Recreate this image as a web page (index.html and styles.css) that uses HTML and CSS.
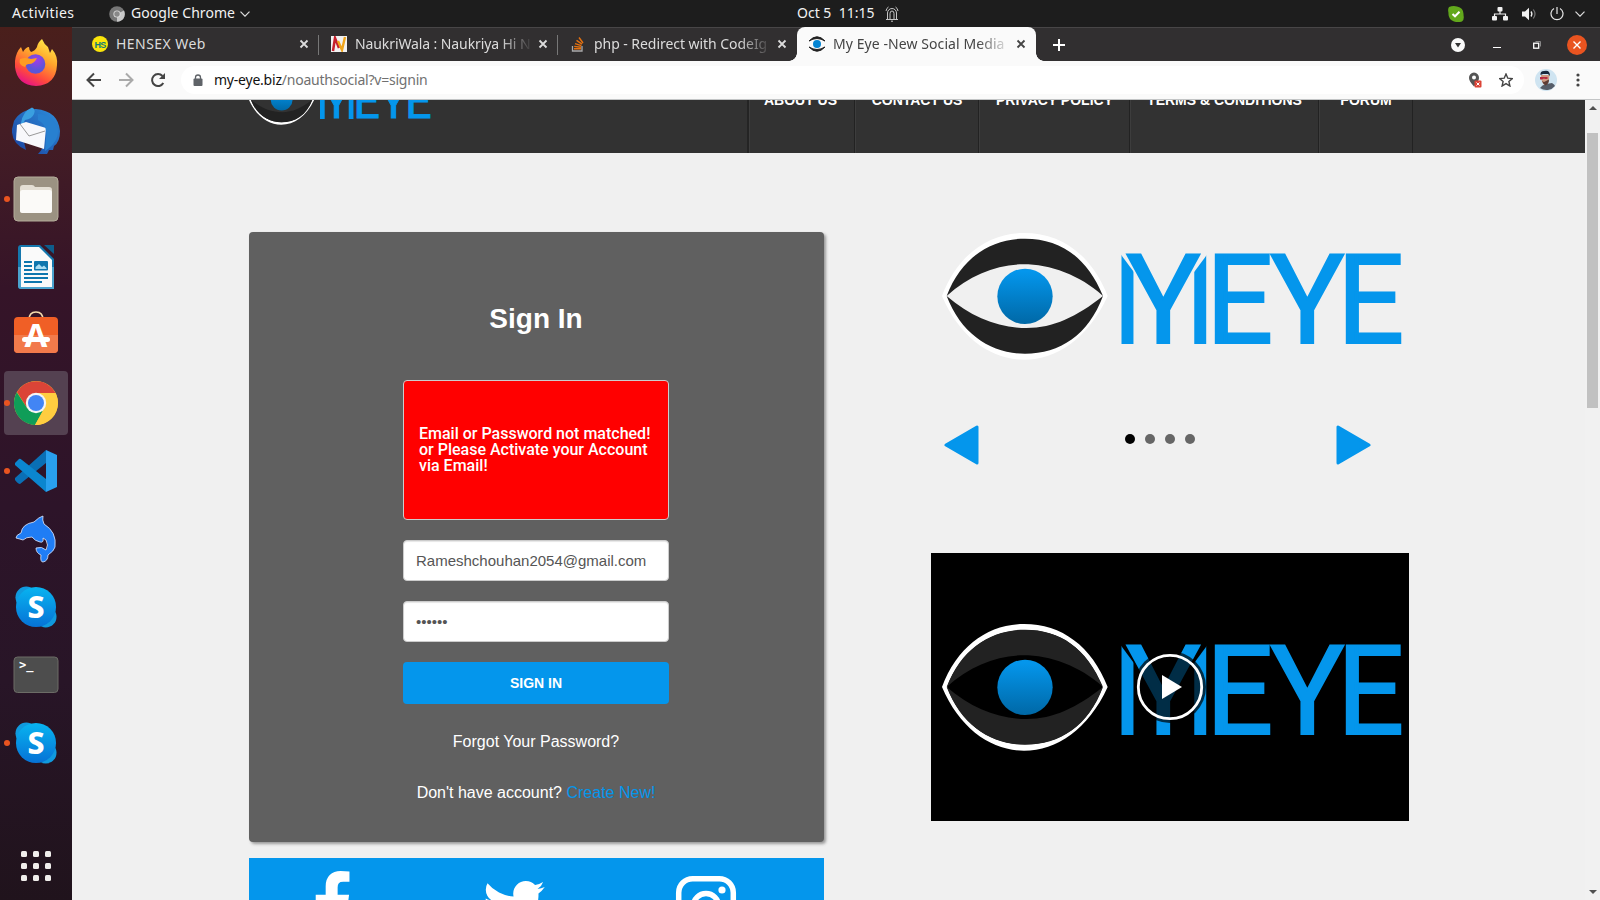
FILE: index.html
```html
<!DOCTYPE html>
<html lang="en">
<head>
<meta charset="utf-8">
<title>My Eye -New Social Media</title>
<link rel="stylesheet" href="styles.css">
</head>
<body>
<svg class="defs" width="0" height="0">
  <defs>
    <linearGradient id="iris" x1="0" y1="0" x2="0" y2="1"><stop offset="0.05" stop-color="#0496ec"/><stop offset="1" stop-color="#0068a6"/></linearGradient>
    <linearGradient id="sky" x1="0" y1="0" x2="0" y2="1"><stop offset="0" stop-color="#08b4f0"/><stop offset="1" stop-color="#0672d6"/></linearGradient>
    <linearGradient id="fox" x1="0.8" y1="0" x2="0.3" y2="1"><stop offset="0" stop-color="#fff14a"/><stop offset="0.4" stop-color="#ffa42c"/><stop offset="0.75" stop-color="#ff4a3c"/><stop offset="1" stop-color="#e5108a"/></linearGradient>
    <radialGradient id="globe" cx="0.55" cy="0.3"><stop offset="0" stop-color="#a13bea"/><stop offset="1" stop-color="#5b55d8"/></radialGradient>
    <linearGradient id="bird" x1="0" y1="1" x2="1" y2="0"><stop offset="0" stop-color="#1a3f9c"/><stop offset="1" stop-color="#2d8fdd"/></linearGradient>
    <clipPath id="legLeft"><path d="M600 100L646 162V380H600Z"/></clipPath>
    <clipPath id="legRight"><path d="M864 100L818 162V380H864Z"/></clipPath>
    <symbol id="logo" viewBox="33 27 1434 402">
      <path fill="#fff" fill-rule="evenodd" d="M66 228C112 105 205 39 312 39C425 39 515 105 563 228C505 355 410 419 312 419C215 419 120 355 66 228ZM81 228C126 345 215 400 315 400C420 400 504 345 548 228C499 111 420 57 315 57C216 57 126 111 81 228Z"/>
      <path fill="#222" fill-rule="evenodd" d="M80 228C125 345 215 401 315 401C420 401 505 345 549 228C500 110 420 56 315 56C215 56 125 110 80 228ZM80 228C150 165 230 133 310 133C390 133 480 165 549 228C470 290 400 324 320 324C235 324 155 292 80 228Z"/>
      <circle cx="315" cy="229" r="83" fill="url(#iris)"/>
      <g fill="#0496ec" font-family="Roboto, sans-serif" font-size="379">
        <text x="571" y="373" clip-path="url(#legLeft)">I</text>
        <text x="789" y="373" clip-path="url(#legRight)">I</text>
        <g stroke="#0496ec" stroke-width="6" font-size="371">
          <text x="619" y="370">Y</text>
          <text x="858" y="370" textLength="202" lengthAdjust="spacingAndGlyphs">E</text>
          <text x="1051" y="370">Y</text>
          <text x="1251" y="370" textLength="202" lengthAdjust="spacingAndGlyphs">E</text>
        </g>
      </g>
    </symbol>
    <symbol id="skype" viewBox="0 0 44 44">
      <circle cx="12" cy="12" r="11" fill="#109ade"/><circle cx="32" cy="32" r="11" fill="#109ade"/>
      <circle cx="22" cy="22" r="20.5" fill="url(#sky)"/>
      <text x="22" y="33" text-anchor="middle" font-family="Noto Sans, sans-serif" font-weight="800" font-size="31" fill="#fff">S</text>
    </symbol>
    <symbol id="close" viewBox="0 0 10 10"><path d="M1.5 1.5L8.5 8.5M8.5 1.5L1.5 8.5" stroke="currentColor" stroke-width="1.8"/></symbol>
    <symbol id="chev" viewBox="0 0 10 6"><path d="M.5 .7L5 5.2L9.500 .7" fill="none" stroke="#ddd" stroke-width="1.2"/></symbol>
  </defs>
</svg>

<header class="topbar">
  <span class="activities">Activities</span>
  <svg class="tb-chrome" viewBox="0 0 16 16"><circle cx="8" cy="8" r="7.8" fill="#777"/><path d="M8 8L15 4.600A7.800 7.800 0 0 1 8 15.800Z" fill="#c8c8c8"/><circle cx="8" cy="8" r="3.600" fill="#ddd"/><circle cx="8" cy="8" r="2.700" fill="#888"/></svg>
  <span class="app-name">Google Chrome</span>
  <svg class="tb-chev" viewBox="0 0 10 6"><use href="#chev"/></svg>
  <span class="clock">Oct 5&nbsp; 11:15</span>
  <svg class="bell" viewBox="0 0 14 16" fill="none" stroke="#d8d8d8" stroke-width=".9"><path d="M1 13.500H13M2.500 13V7A4.500 4.500 0 0 1 11.500 7V13M5 13V7.500A2 2.500 0 0 1 9 7.500V13M6 15.200H8M1 5Q1.500 2 3.500 1M13 5Q12.500 2 10.500 1"/></svg>
  <svg class="status-skype" viewBox="0 0 16 16"><path d="M1 1Q5-.5 9 .5Q16 2 15.500 9Q16.500 14 14 15.500Q10 16.500 6 15.500Q0 13 .5 7Q-.5 3 1 1Z" fill="#62a81c"/><path d="M4.500 8L7 10.300L11.500 5.800" fill="none" stroke="#fff" stroke-width="2"/></svg>
  <svg class="status-net" viewBox="0 0 16 14" fill="#f2f2f2"><rect x="5.500" width="5" height="4.500" rx="1"/><rect y="9" width="5" height="4.500" rx="1"/><rect x="11" y="9" width="5" height="4.500" rx="1"/><path d="M8 4V7M2.500 9.500V7H13.500V9.500" fill="none" stroke="#f2f2f2" stroke-width="1.200"/></svg>
  <svg class="status-vol" viewBox="0 0 15 14"><path d="M0 4.500H3L7 .8V13.200L3 9.500H0Z" fill="#f2f2f2"/><path d="M9 4.500Q10.800 7 9 9.500" fill="none" stroke="#f2f2f2" stroke-width="1.300"/><path d="M11.300 2.500Q14.700 7 11.300 11.500" fill="none" stroke="#777" stroke-width="1.200"/></svg>
  <svg class="status-pow" viewBox="0 0 14 14" fill="none" stroke="#e6e6e6" stroke-width="1.200"><path d="M7 0V7M4 1.500A6 6 0 1 0 10 1.500"/></svg>
  <svg class="status-chev" viewBox="0 0 10 6"><use href="#chev"/></svg>
</header>

<div class="desktop">
  <nav class="dock">
    <div class="dock-item"><svg viewBox="0 0 48 48">
      <path fill="url(#fox)" d="M3 22Q4 13 9 8L11 13Q14 8 17 8Q17 11 19 13Q23 12 25 8Q26 3 30 0Q32 5 36 8L38 14L40 10Q46 17 45 26Q44 46 24 47Q5 46 3 28Z"/>
      <circle cx="23.500" cy="25" r="9.800" fill="url(#globe)"/>
      <path fill="#ff9b22" d="M8 20Q13 18 19 20L25 19Q22 25 17 25Q14 25 13 28Q6 26 8 20Z"/></svg></div>
    <div class="dock-item"><svg viewBox="0 0 48 48">
      <path fill="url(#bird)" d="M2 14Q9 2 24 2Q46 4 48 24Q48 35 42 39L41 43L37 43L35 47L26 47Q29 44 31 40L12 35L14 43Q-1 36 0 22Z"/>
      <path fill="#3a9fe0" d="M9 16Q11 4 20 .5Q24 2 22 7Q20 12 13 13L10 19Z"/>
      <path fill="#f8f8fb" d="M5 18L14 15L34 21L32 42L4 33Z"/><path d="M8 17L17 29L33 24" fill="none" stroke="#999"/>
      <path fill="#2880d0" d="M26 13Q36 18 34 31L33 44Q47 35 46 22Q40 7 26 7Z"/></svg></div>
    <div class="dock-item"><i class="run-dot"></i><svg viewBox="0 0 48 48">
      <rect x="2" y="2" width="44" height="44" rx="4" fill="#9b9282" stroke="#b4ac9a"/><path d="M8 13Q8 10 11 10H20Q22 10 23 12H37Q40 12 40 15V35Q40 38 37 38H11Q8 38 8 35Z" fill="#e4dfd4"/><rect x="8" y="15" width="32" height="23" rx="2.500" fill="#fbfaf8"/></svg></div>
    <div class="dock-item"><svg viewBox="0 0 48 48">
      <path d="M9 2H28L42 16V46H9Q6 46 6 43V5Q6 2 9 2Z" fill="#1577ad"/><path d="M6 24H42V46H9Q6 46 6 43Z" fill="#4ba3cf"/><path d="M9 4H27L40 17V44H9Z" fill="#fafafa"/><path d="M32 2H42V11Z" fill="#0e5d8c"/>
      <path d="M12 19H20M12 23H20M12 27H20M12 31H36M12 35H36M12 39H30" stroke="#0d76ae" stroke-width="2"/><rect x="22" y="18" width="14" height="9.500" rx="1" fill="#0d76ae"/><path d="M23.500 26V24L27 21L30 24L32 22.500L34.500 25V26Z" fill="#a8dcf2"/></svg></div>
    <div class="dock-item"><svg viewBox="0 0 48 48">
      <path d="M17 9Q17 1 24 1Q31 1 31 9" fill="none" stroke="#f5dcae" stroke-width="1.700"/><rect x="2" y="6" width="44" height="36" rx="4" fill="#f05f26"/><path d="M2 24H46V38Q46 42 42 42H6Q2 42 2 38Z" fill="#f27a4b"/>
      <text x="24" y="36" text-anchor="middle" font-family="Noto Sans, sans-serif" font-weight="700" font-size="33" fill="#fff">A</text><rect x="10" y="26" width="28" height="5" rx="2.500" fill="#fff"/></svg></div>
    <div class="dock-item active"><i class="run-dot"></i><svg viewBox="0 0 48 48">
      <circle cx="24" cy="24" r="22" fill="#fc3"/><path d="M5 13A22 22 0 0 1 43.500 14H24L15 29Z" fill="#db4437"/><path d="M4.800 13.200L15.200 29.200L33 28L23 46A22 22 0 0 1 4.800 13.200Z" fill="#0f9d58"/><path d="M33 28L23 46A22 22 0 0 0 43.500 14H24Z" fill="#ffcd40"/>
      <circle cx="24" cy="24" r="10.200" fill="#f5f5f5"/><circle cx="24" cy="24" r="8" fill="#4285f4"/></svg></div>
    <div class="dock-item"><i class="run-dot"></i><svg viewBox="0 0 48 48">
      <path d="M34 3V16L8 37Q6 37 3 33V31Z" fill="#0a6fb5"/><path d="M3 16L7 12Q8 11 10 13L34 32V45L3 18Z" fill="#0b86cf"/><path d="M34 3L45 8V40L34 45Z" fill="#29a0ee"/></svg></div>
    <div class="dock-item"><svg viewBox="0 0 48 48">
      <path fill="#1f7df5" stroke="#dfeaff" stroke-width=".8" d="M4 23Q4 20 9 18Q10 9 22 7Q27 2 31 1Q30 5 32 9Q45 17 43 32Q42 36 36 40Q36 46 31 47Q28 47 29 40Q24 38 24 33Q30 31 34 35Q37 30 34 25L31 23Q32 28 28 27Q23 26 20 22Q14 22 11 25Q8 24 4 23Z"/></svg></div>
    <div class="dock-item"><svg viewBox="0 0 48 48"><use href="#skype" x="2.500" y="2.500" width="43" height="43"/></svg></div>
    <div class="dock-item"><svg viewBox="0 0 48 48">
      <rect x="2" y="6" width="44" height="35.500" rx="3.500" fill="#4d4d4d" stroke="#6c6c66"/><text x="7" y="18" font-family="DejaVu Sans Mono, monospace" font-weight="700" font-size="12" fill="#fff">&gt;_</text></svg></div>
    <div class="dock-item"><i class="run-dot"></i><svg viewBox="0 0 48 48"><use href="#skype" x="2.500" y="2.500" width="43" height="43"/></svg></div>
    <div class="apps-grid"><i></i><i></i><i></i><i></i><i></i><i></i><i></i><i></i><i></i></div>
  </nav>

  <main class="browser">
    <div class="tabstrip">
      <div class="tab"><svg class="fav" viewBox="0 0 16 16"><circle cx="8" cy="8" r="8" fill="#fbe50a"/><text x="8" y="11.500" text-anchor="middle" font-family="Liberation Sans, sans-serif" font-weight="700" font-size="9" letter-spacing="-.8" fill="#127a78">HS</text></svg><span class="tab-title t1">HENSEX Web</span><svg class="x"><use href="#close"/></svg></div>
      <div class="tab"><svg class="fav" viewBox="0 0 16 16"><rect width="16" height="16" fill="#f2f2f2"/><path d="M2 15L4 2L8 12" fill="none" stroke="#c6202c" stroke-width="2.500"/><path d="M7 5L11 14L14 1" fill="none" stroke="#f0a51c" stroke-width="2.400"/></svg><span class="tab-title fade t2">NaukriWala : Naukriya Hi N</span><svg class="x"><use href="#close"/></svg></div>
      <div class="tab"><svg class="fav" viewBox="0 0 16 16"><path d="M2.500 10V15H12V10" fill="none" stroke="#aaa" stroke-width="1.300"/><path d="M4 12.800H11M4.200 10.400L11 11.200M5 7.600L11.400 9.600M6.500 4.400L12 8.200M9 1.500L13 7" stroke="#e5710f" stroke-width="1.400"/></svg><span class="tab-title fade t3">php - Redirect with CodeIg</span><svg class="x"><use href="#close"/></svg></div>
      <div class="tab current"><svg class="fav" viewBox="0 0 16 16"><path d="M0 5Q8-3.500 16 5Q8 0 0 5ZM0 11Q8 19.500 16 11Q8 16 0 11Z" fill="#222" stroke="#222"/><circle cx="8" cy="8" r="4" fill="#0484d2"/></svg><span class="tab-title fade t4">My Eye -New Social Media</span><svg class="x"><use href="#close"/></svg></div>
      <svg class="newtab" viewBox="0 0 12 12"><path d="M6 0V12M0 6H12" stroke="#fff" stroke-width="2"/></svg>
      <div class="win-controls">
        <svg class="w-search" viewBox="0 0 14 14"><circle cx="7" cy="7" r="7" fill="#fafafa"/><path d="M4 5H10L7 9.500Z" fill="#333"/></svg>
        <svg class="w-min" viewBox="0 0 8 8"><path d="M0 6.500H8" stroke="#fff"/></svg>
        <svg class="w-max" viewBox="0 0 8 8" fill="none"><path d="M2.500 .5H7.500V5.500" stroke="#888"/><rect x=".7" y="2.200" width="5" height="5" stroke="#fff" stroke-width="1.300"/></svg>
        <svg class="w-close" viewBox="0 0 20 20"><circle cx="10" cy="10" r="10" fill="#e95420"/><path d="M6.500 6.500L13.500 13.500M13.500 6.500L6.500 13.500" stroke="#fff" stroke-width="1.400"/></svg>
      </div>
    </div>
    <div class="toolbar">
      <svg class="nav-ic" viewBox="0 0 16 16" fill="none" stroke="#444" stroke-width="2"><path d="M15 8H2M8 1.500L1.500 8L8 14.500"/></svg>
      <svg class="nav-ic" viewBox="0 0 16 16" fill="none" stroke="#aaa" stroke-width="2"><path d="M1 8H14M8 1.500L14.500 8L8 14.500"/></svg>
      <svg class="nav-ic" viewBox="0 0 16 16"><path d="M13.300 11A6 6 0 1 1 12.500 4" fill="none" stroke="#444" stroke-width="2"/><path d="M15 1V7H9Z" fill="#444"/></svg>
      <div class="omnibox">
        <svg class="lock" viewBox="0 0 10 12"><path d="M2.500 5V3.500A2.500 2.500 0 0 1 7.500 3.500V5" fill="none" stroke="#5f6368" stroke-width="1.300"/><rect x=".5" y="4.500" width="9" height="7.500" rx="1" fill="#5f6368"/></svg>
        <span class="url"><b>my-eye.biz</b>/noauthsocial?v=signin</span>
        <svg class="geo" viewBox="0 0 14 16"><path d="M6 .5A5.200 5.200 0 0 0 1 6Q1 9 6 14.500Q11 9 11 6A5.200 5.200 0 0 0 6 .5Z" fill="#555"/><circle cx="6" cy="5.500" r="2" fill="#fff"/><rect x="6.500" y="8.500" width="7" height="7" rx="1" fill="#dc4437"/><path d="M8.500 10.500L11.500 13.500M11.500 10.500L8.500 13.500" stroke="#fff"/></svg>
        <svg class="star" viewBox="0 0 14 14"><path d="M7 1L8.800 5.200L13.300 5.600L9.900 8.500L10.900 13L7 10.600L3.100 13L4.100 8.500L.7 5.600L5.200 5.200Z" fill="none" stroke="#444" stroke-width="1.400"/></svg>
      </div>
      <svg class="avatar" viewBox="0 0 22 22"><circle cx="11" cy="11" r="11" fill="#cfe4f1"/><path d="M5 19Q7 16 11 15L17 14Q20 16 20 17A11 11 0 0 1 5 19Z" fill="#565d69"/><path d="M6 6Q6 14 10 16Q14 15 14.500 6Z" fill="#d09a80"/><path d="M7 12L9 13L14 10.500Q14 15 10.500 16.500Q8 15 7 12Z" fill="#5d3c35"/><path d="M5.500 6Q5 2 9 2Q15 .5 15 7L13 5H8Z" fill="#18283c"/><path d="M5 8H12.500V10H10L9 9.500L7 10.500H5Z" fill="#b52a40"/></svg>
      <svg class="kebab" viewBox="0 0 4 14" fill="#444"><circle cx="2" cy="2" r="1.600"/><circle cx="2" cy="7" r="1.600"/><circle cx="2" cy="12" r="1.600"/></svg>
    </div>

    <div class="viewport">
      <div class="page">
        <div class="site-header">
          <svg class="site-logo"><use href="#logo"/></svg>
          <ul class="menu">
            <li class="m1">ABOUT US</li><li class="m2">CONTACT US</li><li class="m3">PRIVACY POLICY</li><li class="m4">TERMS &amp; CONDITIONS</li><li class="m5">FORUM</li>
          </ul>
        </div>
        <div class="content">
          <section class="left">
            <form class="card">
              <h1>Sign In</h1>
              <div class="alert">Email or Password not matched! or Please Activate your Account via Email!</div>
              <div class="field">Rameshchouhan2054@gmail.com</div>
              <div class="field dots">••••••</div>
              <div class="submit">SIGN IN</div>
              <p class="forgot">Forgot Your Password?</p>
              <p class="create">Don't have account? <a>Create New!</a></p>
            </form>
            <div class="social">
              <svg viewBox="0 0 1792 1792"><path d="M1343 12v264h-157q-86 0-116 36t-30 108v189h293l-39 296h-254v759h-306v-759h-255v-296h255v-218q0-186 104-288.500t277-102.500q147 0 228 12z"/></svg>
              <svg viewBox="0 0 1792 1792"><path d="M1684 408q-67 98-162 167 1 14 1 42 0 130-38 259.500t-115.500 248.500-184.500 210.500-258 146-323 54.500q-271 0-496-145 35 4 78 4 225 0 401-138-105-2-188-64.500t-114-159.500q33 5 61 5 43 0 85-11-112-23-185.500-111.500t-73.500-205.500v-4q68 38 146 41-66-44-105-115t-39-154q0-88 44-163 121 149 294.500 238.500t371.500 99.500q-8-38-8-74 0-134 94.500-228.500t228.500-94.500q140 0 236 102 109-21 205-78-37 115-142 178 93-10 186-50z"/></svg>
              <svg class="insta" viewBox="0 0 70 70"><rect x="7.700" y="7.700" width="54.600" height="54.600" rx="14" fill="none" stroke="#fff" stroke-width="5.500"/><circle cx="35" cy="35" r="12.500" fill="none" stroke="#fff" stroke-width="5.500"/><circle cx="51" cy="19" r="3.600"/></svg>
            </div>
          </section>
          <section class="right">
            <svg class="big-logo"><use href="#logo"/></svg>
            <div class="slider">
              <svg viewBox="0 0 35 40"><path d="M2 20L33 2V38Z"/></svg>
              <div class="bullets"><i class="on"></i><i></i><i></i><i></i></div>
              <svg viewBox="0 0 35 40"><path d="M33 20L2 2V38Z"/></svg>
            </div>
            <div class="video">
              <svg class="big-logo"><use href="#logo"/></svg>
              <svg class="play" viewBox="0 0 72 72"><circle cx="36" cy="36" r="36" fill="#000" fill-opacity=".7"/><circle cx="36" cy="36" r="31.700" fill="none" stroke="#fff" stroke-width="2.800"/><path d="M28 24V48L48 36Z" fill="#fff"/></svg>
            </div>
          </section>
        </div>
      </div>
      <div class="scrollbar"><svg viewBox="0 0 8 4"><path d="M0 4L4 0L8 4Z" fill="#505050"/></svg><i class="thumb"></i><svg viewBox="0 0 8 4"><path d="M0 0L4 4L8 0Z" fill="#505050"/></svg></div>
    </div>
  </main>
</div>
</body>
</html>
```
FILE: styles.css
```css
* { box-sizing: border-box; }
body { margin: 0; width: 1600px; height: 900px; overflow: hidden; font-family: "Liberation Sans", Arial, sans-serif; background: #f0f0f0; display: flex; flex-direction: column; }
svg { display: block; flex: none; }
.defs { position: absolute; }

/* desktop bar */
.topbar { height: 27px; flex: none; background: #1d1d1d; color: #f2f2f2; display: flex; align-items: center; padding-left: 12px; font: 14px/18px "Noto Sans", sans-serif; white-space: nowrap; }
.activities { width: 97px; letter-spacing: .4px; }
.tb-chrome { width: 16px; height: 16px; margin-right: 6px; }
.app-name { width: 109px; letter-spacing: .05px; }
.tb-chev { width: 10px; height: 6px; margin-right: 547px; }
.clock { width: 88px; }
.activities, .app-name, .clock { padding-bottom: 1px; }
.bell { width: 14px; height: 16px; margin-right: 549px; }
.status-skype { width: 16px; height: 16px; margin-right: 28px; }
.status-net { width: 16px; height: 14px; margin-right: 14px; }
.status-vol { width: 15px; height: 14px; margin-right: 13px; }
.status-pow { width: 14px; height: 14px; margin-right: 11px; }
.status-chev { width: 10px; height: 6px; }

.desktop { flex: 1; display: flex; min-height: 0; }
.dock { width: 72px; flex: none; background: linear-gradient(#4a1f1b 0, #441d25 12%, #351428 30%, #2d1429 55%, #281527 75%, #20131c 100%); padding-top: 2px; display: flex; flex-direction: column; align-items: center; }
.dock-item { position: relative; width: 64px; height: 64px; margin: 2px 0; flex: none; border-radius: 4px; display: grid; place-items: center; }
.dock-item svg { width: 48px; height: 48px; }
.dock-item.active { background: #544151; }
.run-dot { position: absolute; left: 0; top: 29px; width: 6px; height: 6px; border-radius: 50%; background: #e95420; }
.apps-grid { margin: auto 0 19px; display: grid; grid-template-columns: repeat(3, 6px); gap: 6px; }
.apps-grid i { width: 6px; height: 6px; border-radius: 1.5px; background: #f0eeec; }

.browser { flex: 1; display: flex; flex-direction: column; min-width: 0; }
.tabstrip { height: 34px; flex: none; background: #312f30; border-top: 1px solid #484647; display: flex; align-items: center; font: 14px "Noto Sans", sans-serif; color: #dcdcdc; padding-left: 8px; }
.tab { width: 239px; height: 33px; flex: none; display: flex; align-items: center; padding: 0 0 1px 12px; position: relative; }
.tab:nth-child(-n+2)::after { content: ""; position: absolute; right: 0; top: 7px; width: 1px; height: 20px; background: #777; }
.tab .fav { width: 16px; height: 16px; margin-right: 8px; }
.tab-title { width: 180px; overflow: hidden; white-space: nowrap; padding-bottom: 1px; }
.fade { -webkit-mask-image: linear-gradient(90deg, #000 145px, transparent 178px); mask-image: linear-gradient(90deg, #000 145px, transparent 178px); }
.t1 { letter-spacing: .45px; }
.t2 { letter-spacing: -.1px; }
.t3 { letter-spacing: -.05px; }
.t4 { letter-spacing: .08px; }
.tab .x { width: 10px; height: 10px; margin-left: 3px; }
.tab.current { margin: -1px 0 0; height: 34px; background: #fafafa; color: #454545; border-radius: 8px 8px 0 0; }
.tab.current::before, .tab.current::after { content: ""; position: absolute; bottom: 0; width: 8px; height: 8px; }
.tab.current::before { left: -8px; background: radial-gradient(circle at 0 0, transparent 7.5px, #fafafa 8px); }
.tab.current::after { right: -8px; background: radial-gradient(circle at 100% 0, transparent 7.500px, #fafafa 8px); }
.newtab { width: 12px; height: 12px; margin-left: 17px; }
.win-controls { margin-left: auto; display: flex; align-items: center; padding-right: 13px; }
.w-search { width: 14px; height: 14px; margin-right: 28px; }
.w-min { width: 8px; height: 8px; margin-right: 32px; }
.w-max { width: 8px; height: 8px; margin-right: 26px; }
.w-close { width: 20px; height: 20px; }

.toolbar { height: 39px; flex: none; background: #fafafa; border-bottom: 1px solid #c3c5c6; display: flex; align-items: center; padding-left: 14px; }
.nav-ic { width: 16px; height: 16px; margin-right: 16px; }
.omnibox { width: 1343px; height: 28px; background: #fff; border-radius: 14px; display: flex; align-items: center; padding-left: 12px; margin-left: -1px; font: 14px "Noto Sans", sans-serif; color: #707070; }
.omnibox b { font-weight: 400; color: #111; }
.lock { width: 10px; height: 12px; margin-right: 11px; }
.url { flex: 1; letter-spacing: -.22px; padding-bottom: 2px; }
.geo { width: 14px; height: 16px; margin-right: 17px; }
.star { width: 14px; height: 14px; margin-right: 11px; }
.avatar { width: 22px; height: 22px; margin-left: 11px; }
.kebab { width: 4px; height: 14px; margin-left: 19px; }

/* page */
.viewport { flex: 1; display: flex; min-height: 0; }
.page { width: 1513px; background: #f0f0f0; overflow: hidden; }
.site-header { height: 53px; background: #323232; display: flex; align-items: flex-start; padding-left: 172px; overflow: hidden; }
.site-logo { width: 190px; height: 53px; margin: -27px 313px 0 0; }
.menu { list-style: none; margin: 0; padding: 0; display: flex; font-weight: 700; font-size: 14px; line-height: 0; color: #fff; border-left: 2px solid #242424; }
.menu li { height: 53px; text-align: center; border-right: 1px solid #222; border-left: 1px solid #3d3d3d; white-space: nowrap; }
.menu .m1 { width: 106px; padding-right: 3px; }
.m2 { width: 124px; }
.m3 { width: 151px; }
.m4 { width: 189px; }
.m5 { width: 94px; }
.content { display: flex; padding-left: 177px; }
.left { width: 575px; margin-top: 79px; margin-right: 107px; }
.card { height: 610px; background: #606060; border-radius: 4px; box-shadow: 2px 2px 3px #999; padding: 71px 155px 0 154px; color: #fff; }
h1 { margin: 0 0 45px; font-size: 28px; line-height: 32px; text-align: center; }
.alert { height: 140px; border: 1px solid #ccc; border-radius: 4px; background: #f00; font: 500 16px/16px Roboto, sans-serif; padding: 45px 15px 0; margin-bottom: 20px; }
.field { height: 41px; border: 1px solid #ccc; border-radius: 4px; background: #fff; box-shadow: inset 0 1px 1px rgba(0,0,0,.1); color: #555; font-size: 15px; line-height: 39px; padding-left: 12px; margin-bottom: 20px; }
.submit { height: 42px; border-radius: 4px; background: #0496ec; font-size: 14px; font-weight: 700; line-height: 42px; text-align: center; }
.card p { margin: 0 -20px; text-align: center; font-size: 16px; line-height: 20px; }
.card .forgot { margin-top: 28px; }
.card .create { margin-top: 31px; }
.create a { color: #0496ec; }
.social { height: 70px; margin-top: 16px; background: #0496ec; display: flex; padding: 13px 0 0 48px; gap: 112px; }
.social svg { width: 70px; height: 70px; fill: #fff; }
.social .insta { margin-left: 10px; }
.right { width: 478px; }
.big-logo { width: 478px; height: 134px; margin-top: 76px; }
.slider { height: 40px; margin-top: 62px; padding: 0 38px 0 13px; display: flex; justify-content: space-between; align-items: center; }
.slider svg { width: 35px; height: 40px; fill: #0496ec; stroke: #0496ec; stroke-width: 3px; stroke-linejoin: round; }
.bullets { display: flex; gap: 10px; margin: -12px 0 0 4px; }
.bullets i { width: 10px; height: 10px; border-radius: 50%; background: #666; }
.bullets .on { background: #000; }
.video { position: relative; height: 268px; margin-top: 88px; background: #000; display: flex; align-items: center; }
.video .big-logo { margin-top: 0; }
.play { position: absolute; left: 203px; top: 98px; width: 72px; height: 72px; }
.scrollbar { width: 15px; background: #f1f1f1; display: flex; flex-direction: column; align-items: center; padding: 6px 0 6px; }
.scrollbar svg { width: 8px; height: 4px; }
.thumb { width: 11px; height: 275px; background: #c1c1c1; margin: 23px 0 auto; }
```
